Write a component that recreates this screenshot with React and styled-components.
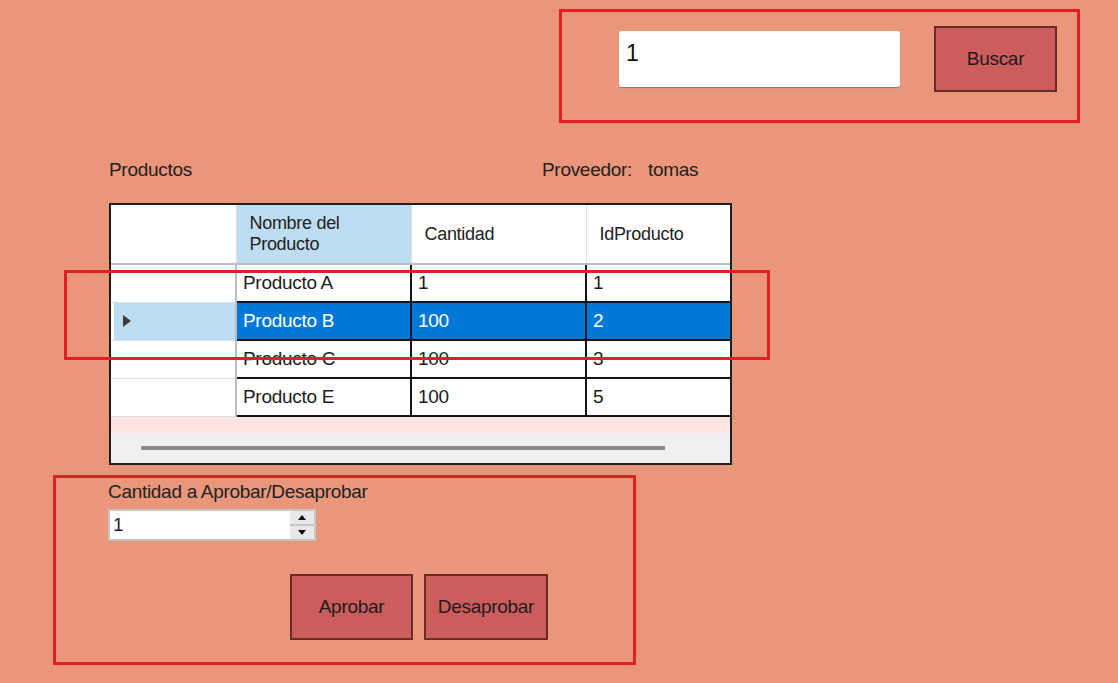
import React from 'react'
import styled, { createGlobalStyle } from 'styled-components'

const GlobalStyle = createGlobalStyle`
  html, body {
    margin: 0;
    padding: 0;
    background: #E9967A;
  }
  body {
    font-family: "Liberation Sans", Arial, sans-serif;
    color: #222;
  }
`;

const Page = styled.div`
  position: relative;
  width: 1118px;
  height: 683px;
  overflow: hidden;
  background: #E9967A;
  font-size: 19px;
  letter-spacing: -0.3px;
`;

const SearchRow = styled.div`
  display: flex;
  align-items: flex-start;
  gap: 34px;
  padding: 26px 0 0 619px;
`;

const SearchBox = styled.div`
  margin-top: 5px;
  width: 281px;
  height: 56px;
  box-sizing: border-box;
  background: #fff;
  border-radius: 2px;
  box-shadow: 0 1px 1px #7a7a7a;
  padding: 9px 7px;
  font-size: 23px;
  color: #111;
`;

const WinButton = styled.div`
  width: ${props => props.w}px;
  height: 66px;
  box-sizing: border-box;
  background: #CD5C5C;
  border: 2px solid #6a2b2b;
  display: flex;
  align-items: center;
  justify-content: center;
  color: #1c1c1c;
`;

const InfoRow = styled.div`
  display: grid;
  grid-template-columns: 433px auto;
  margin: 68px 0 0 109px;
  line-height: 20px;
`;

const Provider = styled.div`
  display: flex;
  gap: 16px;
`;

const Grid = styled.div`
  margin: 23px 0 0 109px;
  width: 623px;
  height: 262px;
  box-sizing: border-box;
  border: 2px solid #1e1e1e;
  display: flex;
  flex-direction: column;
  overflow: hidden;
  background: #FFE4E1;
`;

const Table = styled.table`
  border-collapse: collapse;
  table-layout: fixed;
  width: 620px;
  background: #fff;
`;

const HeadCell = styled.th`
  height: 58px;
  padding: 0 0 0 13px;
  text-align: left;
  font-weight: normal;
  font-size: 18px;
  line-height: 21px;
  background: ${props => (props.active ? '#BFDDF2' : '#fff')};
  border-right: 1px solid #e2e2e2;
  border-bottom: 2px solid #bdbdbd;
  color: #222;
`;

const RowHead = styled.td`
  height: 36px;
  padding: 0;
  border-top: 1px solid #e0e0e0;
  border-bottom: 1px solid #e0e0e0;
  border-right: 2px solid #bdbdbd;
  background: #fff;
`;

const RowHeadFill = styled.div`
  height: 100%;
  margin-left: 3px;
  display: flex;
  align-items: center;
  padding-left: 9px;
  background: ${props => (props.selected ? '#BFDDF2' : '#fff')};
`;

const Arrow = styled.div`
  width: 0;
  height: 0;
  border-top: 6px solid transparent;
  border-bottom: 6px solid transparent;
  border-left: 8px solid #3c3c3c;
`;

const Cell = styled.td`
  height: 36px;
  padding: 0 0 0 6px;
  border: 2px solid #141414;
  border-left-color: ${props => (props.first ? '#bdbdbd' : '#141414')};
  background: ${props => (props.selected ? '#0078D7' : '#fff')};
  color: ${props => (props.selected ? '#fff' : '#1c1c1c')};
  white-space: nowrap;
  overflow: hidden;
`;

const PinkGap = styled.div`
  height: 16px;
  background: #FFE4E1;
`;

const ScrollArea = styled.div`
  flex: 1;
  background: #F0F0F0;
  display: flex;
  align-items: center;
  padding-left: 30px;
`;

const ScrollThumb = styled.div`
  width: 524px;
  height: 4px;
  border-radius: 1px;
  background: #8a8a8a;
`;

const AmountLabel = styled.div`
  margin: 17px 0 0 108px;
  line-height: 20px;
`;

const Spinner = styled.div`
  margin: 7px 0 0 108px;
  width: 208px;
  height: 32px;
  box-sizing: border-box;
  border: 2px solid #c6c6c6;
  background: #fff;
  display: flex;
`;

const SpinValue = styled.div`
  flex: 1;
  padding: 3px 3px;
  color: #2a1a4a;
`;

const SpinButtons = styled.div`
  width: 24px;
  display: flex;
  flex-direction: column;
  gap: 2px;
  background: #c6c6c6;
`;

const SpinButton = styled.div`
  flex: 1;
  background: #e8e8e8;
  display: flex;
  align-items: center;
  justify-content: center;
  &::after {
    content: '';
    width: 0;
    height: 0;
    border-left: 4px solid transparent;
    border-right: 4px solid transparent;
    ${props => (props.up ? 'border-bottom: 5px solid #111;' : 'border-top: 5px solid #111;')}
  }
`;

const ActionRow = styled.div`
  display: flex;
  gap: 11px;
  margin: 33px 0 0 290px;
`;

const Marker = styled.div`
  position: absolute;
  left: ${props => props.x}px;
  top: ${props => props.y}px;
  width: ${props => props.w}px;
  height: ${props => props.h}px;
  box-sizing: border-box;
  border: 3px solid #E41E26;
  pointer-events: none;
`;

const rows = [
  { name: 'Producto A', qty: '1', id: '1' },
  { name: 'Producto B', qty: '100', id: '2', selected: true },
  { name: 'Producto C', qty: '100', id: '3' },
  { name: 'Producto E', qty: '100', id: '5' },
];

const App = () => {
  return (
    <Page>
      <GlobalStyle />
      <SearchRow>
        <SearchBox>1</SearchBox>
        <WinButton w={123}>Buscar</WinButton>
      </SearchRow>

      <InfoRow>
        <span>Productos</span>
        <Provider>
          <span>Proveedor:</span>
          <span>tomas</span>
        </Provider>
      </InfoRow>

      <Grid>
        <Table>
          <colgroup>
            <col style={{ width: 125 }} />
            <col style={{ width: 175 }} />
            <col style={{ width: 175 }} />
            <col style={{ width: 145 }} />
          </colgroup>
          <thead>
            <tr>
              <HeadCell />
              <HeadCell active>Nombre del<br />Producto</HeadCell>
              <HeadCell>Cantidad</HeadCell>
              <HeadCell>IdProducto</HeadCell>
            </tr>
          </thead>
          <tbody>
            {rows.map(r => (
              <tr key={r.name}>
                <RowHead>
                  <RowHeadFill selected={r.selected}>
                    {r.selected && <Arrow />}
                  </RowHeadFill>
                </RowHead>
                <Cell first selected={r.selected}>{r.name}</Cell>
                <Cell selected={r.selected}>{r.qty}</Cell>
                <Cell selected={r.selected}>{r.id}</Cell>
              </tr>
            ))}
          </tbody>
        </Table>
        <PinkGap />
        <ScrollArea>
          <ScrollThumb />
        </ScrollArea>
      </Grid>

      <AmountLabel>Cantidad a Aprobar/Desaprobar</AmountLabel>
      <Spinner>
        <SpinValue>1</SpinValue>
        <SpinButtons>
          <SpinButton up />
          <SpinButton />
        </SpinButtons>
      </Spinner>

      <ActionRow>
        <WinButton w={123}>Aprobar</WinButton>
        <WinButton w={124}>Desaprobar</WinButton>
      </ActionRow>

      <Marker x={559} y={9} w={521} h={114} />
      <Marker x={64} y={270} w={706} h={90} />
      <Marker x={53} y={475} w={583} h={190} />
    </Page>
  )
}

export default App
